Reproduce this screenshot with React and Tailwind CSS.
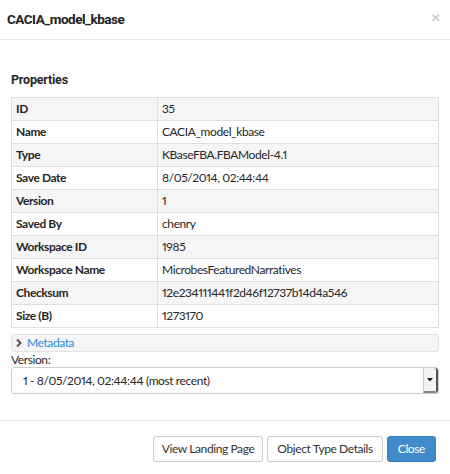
import React from 'react';

const rows = [
  ['ID', '35'],
  ['Name', 'CACIA_model_kbase'],
  ['Type', 'KBaseFBA.FBAModel-4.1'],
  ['Save Date', '8/05/2014, 02:44:44'],
  ['Version', '1'],
  ['Saved By', 'chenry'],
  ['Workspace ID', '1985'],
  ['Workspace Name', 'MicrobesFeaturedNarratives'],
  ['Checksum', '12e234111441f2d46f12737b14d4a546'],
  ['Size (B)', '1273170'],
];

export default function App() {
  return (
    <div className="w-[450px] h-[474px] bg-white text-[#262626] font-['Lato',sans-serif] proportional-nums tracking-[-0.4px] flex flex-col">
      <div className="h-[40px] border-b border-[#e5e5e5] flex items-center justify-between pl-[7px] pr-[10px]">
        <h4 className="font-['Roboto',sans-serif] font-bold text-[13.5px] tracking-[-0.5px] text-[#222]">CACIA_model_kbase</h4>
        <span className="text-[#c8c8c8] text-[16px] font-bold leading-none -mt-[6px]">×</span>
      </div>

      <div className="px-[11px] pt-[32px]">
        <h5 className="font-['Roboto',sans-serif] font-bold text-[12.5px] tracking-[-0.2px] leading-[16px] mb-[9px]">Properties</h5>
        <table className="w-full border-collapse border border-[#ddd] text-[12px]">
          <tbody>
            {rows.map(([k, v], i) => (
              <tr key={k} className={i % 2 === 0 ? 'bg-[#f5f5f5]' : 'bg-white'}>
                <td className="w-[146px] h-[23px] border border-[#ddd] px-[4px] font-bold">{k}</td>
                <td className="h-[23px] border border-[#ddd] px-[4px]">{v}</td>
              </tr>
            ))}
          </tbody>
        </table>

        <div className="mt-[6px] h-[18px] bg-[#f5f5f5] border border-[#e3e3e3] rounded-[3px] flex items-center pl-[3px] text-[12px]">
          <svg width="8" height="10" viewBox="0 0 8 10" className="mr-[4px]">
            <path d="M2 1.5 L5.5 5 L2 8.5" fill="none" stroke="#555" strokeWidth="2" />
          </svg>
          <span className="text-[#2a8dd4]">Metadata</span>
        </div>

        <div className="text-[12px] leading-[14px] mt-[1px]">Version:</div>
        <div className="h-[27px] border border-[#ccc] rounded-[3px] flex items-stretch text-[12px]">
          <div className="flex-1 flex items-center pl-[11px]">1 - 8/05/2014, 02:44:44 (most recent)</div>
          <div className="w-[15px] bg-[#f2f2f2] border-l border-[#ccc] border-r-2 border-b-2 border-r-[#555] border-b-[#888] rounded-r-[3px] flex items-center justify-center">
            <svg width="6" height="4" viewBox="0 0 6 4"><path d="M0 0 L6 0 L3 3.5 Z" fill="#222" /></svg>
          </div>
        </div>
      </div>

      <div className="mt-auto h-[54px] border-t border-[#e5e5e5] flex items-start justify-end gap-[4px] pt-[15px] pr-[14px] text-[12px]">
        <button className="h-[26px] px-[8px] border border-[#ccc] rounded-[3px] bg-white text-[#333]">View Landing Page</button>
        <button className="h-[26px] px-[9px] border border-[#ccc] rounded-[3px] bg-white text-[#333]">Object Type Details</button>
        <button className="h-[26px] px-[10px] border border-[#357ebd] rounded-[3px] bg-[#428bca] text-white">Close</button>
      </div>
    </div>
  );
}
